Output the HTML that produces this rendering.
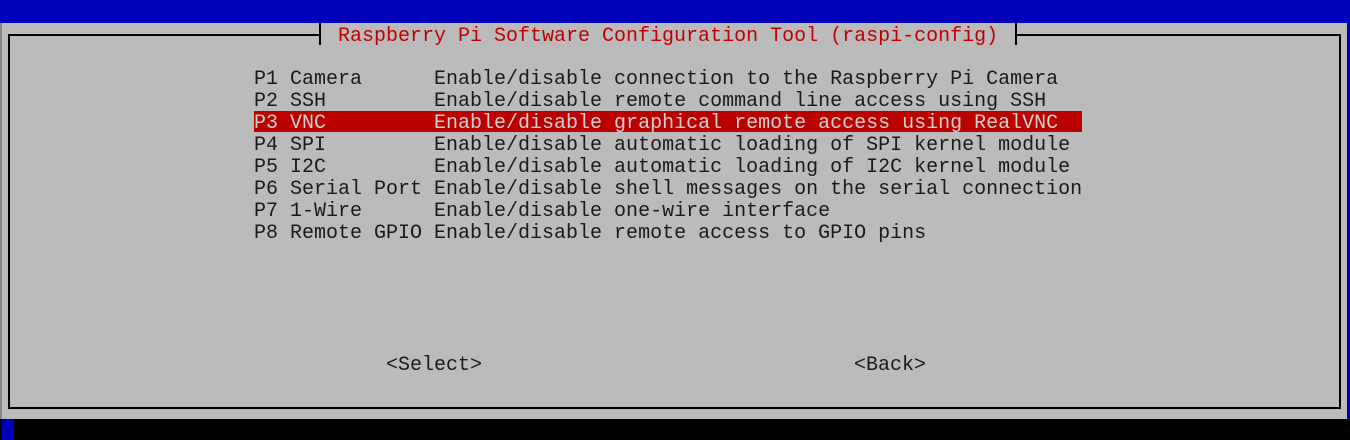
<!DOCTYPE html>
<html><head><meta charset="utf-8"><style>
html,body{margin:0;padding:0;}
body{width:1350px;height:440px;background:#000;position:relative;overflow:hidden;font-family:"Liberation Mono","Courier New",monospace;font-size:20px;}
.a{position:absolute;}
.t{position:absolute;white-space:pre;line-height:22px;height:22px;color:#1a1a1a;margin-top:3px;}
.ln{position:absolute;background:#000;}
</style></head><body>
<div class="a" style="left:0;top:0;width:1350px;height:23px;background:#0000bb"></div>
<div class="a" style="left:0;top:23px;width:2px;height:396px;background:#888"></div>
<div class="a" style="left:2px;top:23px;width:1345px;height:396px;background:#bbbbbb"></div>
<div class="a" style="left:1347px;top:23px;width:3px;height:396px;background:#0000bb"></div>
<div class="a" style="left:2px;top:419px;width:12px;height:21px;background:#0000bb"></div>
<div class="ln" style="left:8px;top:34px;width:313px;height:2px"></div>
<div class="ln" style="left:1016px;top:34px;width:325px;height:2px"></div>
<div class="ln" style="left:8px;top:34px;width:2px;height:375px"></div>
<div class="ln" style="left:1339px;top:34px;width:2px;height:375px"></div>
<div class="ln" style="left:8px;top:407px;width:1333px;height:2px"></div>
<div class="ln" style="left:319px;top:23px;width:2px;height:22px"></div>
<div class="ln" style="left:1015px;top:23px;width:2px;height:22px"></div>
<div class="t" style="left:326px;top:23px;color:#c00000"> Raspberry Pi Software Configuration Tool (raspi-config) </div>
<div class="a" style="left:254px;top:111px;width:828px;height:21px;background:#bb0000"></div>
<div class="t" style="left:254px;top:66px">P1 Camera      Enable/disable connection to the Raspberry Pi Camera</div>
<div class="t" style="left:254px;top:88px">P2 SSH         Enable/disable remote command line access using SSH</div>
<div class="t" style="left:254px;top:110px;color:#cfcfcf">P3 VNC         Enable/disable graphical remote access using RealVNC</div>
<div class="t" style="left:254px;top:132px">P4 SPI         Enable/disable automatic loading of SPI kernel module</div>
<div class="t" style="left:254px;top:154px">P5 I2C         Enable/disable automatic loading of I2C kernel module</div>
<div class="t" style="left:254px;top:176px">P6 Serial Port Enable/disable shell messages on the serial connection</div>
<div class="t" style="left:254px;top:198px">P7 1-Wire      Enable/disable one-wire interface</div>
<div class="t" style="left:254px;top:220px">P8 Remote GPIO Enable/disable remote access to GPIO pins</div>
<div class="t" style="left:386px;top:352px">&lt;Select&gt;</div>
<div class="t" style="left:854px;top:352px">&lt;Back&gt;</div>
</body></html>
